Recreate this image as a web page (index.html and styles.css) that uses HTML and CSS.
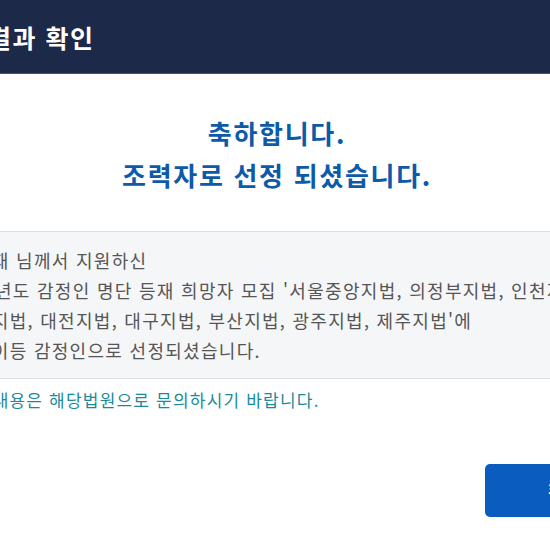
FILE: index.html
```html
<!DOCTYPE html>
<html lang="ko">
  <head>
    <meta charset="UTF-8" />
    <meta name="viewport" content="width=device-width, initial-scale=1.0" />
    <title>선정결과 확인</title>

    <link rel="stylesheet" href="styles.css">
  </head>
  <body>
    <div class="modal">
      <div class="modal-header">
        <h1>선정결과 확인</h1>
      </div>

      <div class="modal-body">
        <p class="congrats">
          축하합니다.<br />
          조력자로 선정 되셨습니다.
        </p>

        <div class="result-box">
          <p>
            위 신청인 김도재 님께서 지원하신<br />
            귀하께서 2025년도 감정인 명단 등재 희망자 모집 '서울중앙지법, 의정부지법, 인천지법, 수원지법, 춘천<br />
            수원지법, 춘천지법, 대전지법, 대구지법, 부산지법, 광주지법, 제주지법'에<br />
            해당 건축분야 이등 감정인으로 선정되셨습니다.
          </p>
        </div>

        <p class="notice">※ 자세한 내용은 해당법원으로 문의하시기 바랍니다.</p>

        <div class="actions">
          <button id="confirm-btn">확인</button>
        </div>
      </div>
    </div>
  </body>
</html>
```

FILE: styles.css
```css
body {
  margin: 0;
  overflow: hidden;
  background: white;
  font-family: "Noto Sans CJK KR", "Noto Sans", sans-serif;
}

.modal {
  width: 860px;
  margin-left: -153px;
  background: white;
}

.modal-header {
  height: 73px;
  padding-left: 92px;
  display: flex;
  align-items: center;
  background: #1d2948;
  border-bottom: 1px solid #4a5266;
}

.modal-header h1 {
  margin: 0;
  font-size: 25px;
  letter-spacing: 1.5px;
  font-weight: bold;
  color: white;
}

.modal-body {
  padding: 38px 0 0;
}

.congrats {
  margin: 0;
  text-align: center;
  font-size: 26px;
  line-height: 42px;
  letter-spacing: 1.7px;
  font-weight: bold;
  color: #0d5aa9;
}

.result-box {
  margin-top: 35px;
  padding: 13px 25px;
  background: #f5f6f8;
  border-top: 1px solid #dcdee2;
  border-bottom: 1px solid #dcdee2;
}

.result-box p {
  margin: 0;
  font-size: 18px;
  line-height: 30px;
  letter-spacing: 1.3px;
  color: #555;
  white-space: nowrap;
}

.notice {
  margin: 6px 0 0;
  padding-left: 65px;
  font-size: 17px;
  line-height: 30px;
  letter-spacing: 1.2px;
  color: #198a9c;
}

.actions {
  margin-top: 49px;
  padding-right: 64px;
  display: flex;
  justify-content: flex-end;
}

button {
  width: 158px;
  height: 53px;
  background: #0a5cbf;
  border: none;
  border-radius: 5px;
  color: white;
  font-family: inherit;
  font-size: 17px;
  font-weight: bold;
  cursor: pointer;
}
```
